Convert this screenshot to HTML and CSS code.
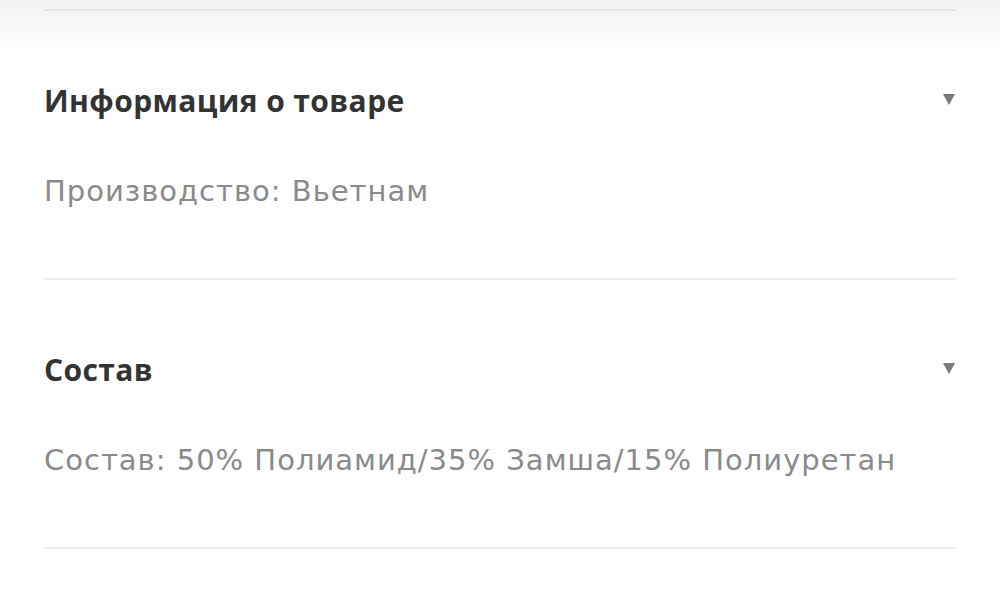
FILE: index.html
```html
<!DOCTYPE html>
<html lang="ru">
<head>
<meta charset="utf-8">
<link rel="stylesheet" href="styles.css">
</head>
<body>
<div class="page">
  <div class="top-line"></div>
  <section class="acc">
    <div class="acc-head">
      <h2 class="acc-title">Информация о товаре</h2>
      <span class="caret"></span>
    </div>
    <p class="acc-body">Производство: Вьетнам</p>
  </section>
  <section class="acc">
    <div class="acc-head">
      <h2 class="acc-title">Состав</h2>
      <span class="caret"></span>
    </div>
    <p class="acc-body">Состав: 50% Полиамид/35% Замша/15% Полиуретан</p>
  </section>
</div>
</body>
</html>
```
FILE: styles.css
```css
html, body {
  margin: 0;
  padding: 0;
  background: #fff;
}
body {
  font-family: "Open Sans", "Noto Sans", sans-serif;
  background: linear-gradient(#f1f1f1 0px, #f8f8f8 25px, #fff 48px);
  height: 604px;
  overflow: hidden;
}
.page {
  padding: 0 44px;
}
.top-line {
  margin-top: 9px;
  height: 2px;
  background: #e4e4e4;
}
.acc {
  padding: 70px 0 67px;
  border-bottom: 2px solid #ececec;
}
.acc-head {
  display: flex;
  align-items: center;
  justify-content: space-between;
}
.acc-title {
  margin: 0;
  font-size: 30px;
  font-weight: 700;
  letter-spacing: 0.4px;
  color: #333;
  line-height: 40px;
}
.caret {
  width: 0;
  height: 0;
  border-left: 6px solid transparent;
  border-right: 6px solid transparent;
  border-top: 11px solid #7a7a7a;
  margin: 0 1px 3px 0;
}
.acc-body {
  margin: 50px 0 0;
  font-family: "DejaVu Sans", sans-serif;
  font-size: 29px;
  letter-spacing: 1px;
  color: #8a8a8a;
  line-height: 40px;
}
```
